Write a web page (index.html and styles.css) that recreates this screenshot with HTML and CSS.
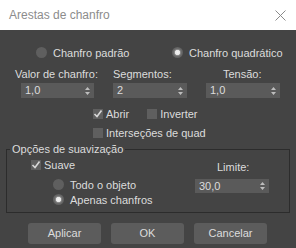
FILE: index.html
```html
<!DOCTYPE html>
<html>
<head>
<meta charset="utf-8">
<link rel="stylesheet" href="styles.css">
</head>
<body>
<div class="window">
  <div class="titlebar">
    <span class="title">Arestas de chanfro</span>
    <svg class="close" width="11" height="11" viewBox="0 0 11 11"><path d="M0.5 0.5 L10.5 10.5 M10.5 0.5 L0.5 10.5" stroke="#8a8a8a" stroke-width="1" fill="none"/></svg>
  </div>
  <div class="content">
    <div class="radio-row">
      <div class="radio"><span class="rb"></span><span>Chanfro padrão</span></div>
      <div class="radio"><span class="rb on"></span><span>Chanfro quadrático</span></div>
    </div>
    <div class="params">
      <div class="col c1">
        <div class="lbl">Valor de chanfro:</div>
        <div class="spin"><span>1,0</span><svg class="arr" width="5" height="8" viewBox="0 0 5 8"><path d="M0 3 L2.5 0 L5 3 Z M0 5 L2.5 8 L5 5 Z" fill="#bdbdbd"/></svg></div>
      </div>
      <div class="col c2">
        <div class="lbl">Segmentos:</div>
        <div class="spin"><span>2</span><svg class="arr" width="5" height="8" viewBox="0 0 5 8"><path d="M0 3 L2.5 0 L5 3 Z M0 5 L2.5 8 L5 5 Z" fill="#bdbdbd"/></svg></div>
      </div>
      <div class="col c3">
        <div class="lbl">Tensão:</div>
        <div class="spin"><span>1,0</span><svg class="arr" width="5" height="8" viewBox="0 0 5 8"><path d="M0 3 L2.5 0 L5 3 Z M0 5 L2.5 8 L5 5 Z" fill="#bdbdbd"/></svg></div>
      </div>
    </div>
    <div class="chk-row row-a">
      <div class="chk"><span class="cb"><svg width="10" height="10" viewBox="0 0 10 10"><path d="M1.5 5 L4 7.5 L8.5 1.5" stroke="#d8d8d8" stroke-width="1.6" fill="none"/></svg></span><span>Abrir</span></div>
      <div class="chk inv"><span class="cb"></span><span>Inverter</span></div>
    </div>
    <div class="chk-row row-b">
      <div class="chk"><span class="cb"></span><span>Interseções de quad</span></div>
    </div>
    <fieldset class="group">
      <legend>Opções de suavização</legend>
      <div class="gbody">
        <div class="gleft">
          <div class="chk suave"><span class="cb"><svg width="10" height="10" viewBox="0 0 10 10"><path d="M1.5 5 L4 7.5 L8.5 1.5" stroke="#d8d8d8" stroke-width="1.6" fill="none"/></svg></span><span>Suave</span></div>
          <div class="radio sub first"><span class="rb"></span><span>Todo o objeto</span></div>
          <div class="radio sub"><span class="rb on"></span><span>Apenas chanfros</span></div>
        </div>
        <div class="gright">
          <div class="lbl limite">Limite:</div>
          <div class="spin lspin"><span>30,0</span><svg class="arr" width="5" height="8" viewBox="0 0 5 8"><path d="M0 3 L2.5 0 L5 3 Z M0 5 L2.5 8 L5 5 Z" fill="#bdbdbd"/></svg></div>
        </div>
      </div>
    </fieldset>
    <div class="buttons">
      <div class="btn">Aplicar</div>
      <div class="btn">OK</div>
      <div class="btn">Cancelar</div>
    </div>
  </div>
</div>
</body>
</html>
```

FILE: styles.css
```css
* { box-sizing: border-box; }
html, body { margin: 0; padding: 0; }
body {
  width: 296px;
  height: 248px;
  overflow: hidden;
  background: #444444;
  font-family: "Liberation Sans", Arial, sans-serif;
  font-size: 11px;
  color: #dcdcdc;
}
.window { width: 296px; height: 248px; }
.titlebar {
  height: 30px;
  background: #ffffff;
  display: flex;
  align-items: center;
  justify-content: space-between;
  padding: 0 10px 0 9px;
}
.title { color: #8c8c8c; font-size: 12px; }
.close { display: block; }
.content { display: flex; flex-direction: column; }
.radio-row {
  margin-top: 14px;
  height: 17px;
  display: grid;
  grid-template-columns: 136px auto;
  padding-left: 36px;
  align-items: center;
}
.radio { display: flex; align-items: center; gap: 6px; line-height: 14px; }
.rb {
  width: 11px; height: 11px; border-radius: 50%;
  background: #5f5f5f;
  flex: none;
}
.rb.on {
  background: radial-gradient(circle, #f4f4f4 0, #e6e6e6 2.3px, #8a8a8a 3px, #6a6a6a 4px, #5f5f5f 5.5px);
}
.params {
  margin-top: 6px;
  display: grid;
  grid-template-columns: 98px 93px 74px;
  padding-left: 15px;
}
.col { display: flex; flex-direction: column; }
.lbl { line-height: 14px; height: 14px; white-space: nowrap; }
.c3 .lbl { margin-left: 17px; }
.spin {
  margin-top: 2px;
  width: 74px; height: 15px;
  background: #5a5a5a;
  display: flex; align-items: center; justify-content: space-between;
  padding: 0 4px 0 4px;
  line-height: 15px;
}
.c1 .spin { margin-left: 6px; width: 73px; }
.arr { display: block; }
.chk-row { display: flex; align-items: center; height: 14px; padding-left: 93px; }
.row-a { margin-top: 9px; }
.row-b { margin-top: 5px; }
.chk { display: flex; align-items: center; gap: 3px; line-height: 14px; }
.chk.inv { margin-left: 18px; }
.cb { width: 10px; height: 10px; background: #5f5f5f; flex: none; display: block; }
.cb svg { display: block; }
.group {
  margin: 2px 0 0 6px;
  width: 284px;
  padding: 0 0 5px 3px;
  border: 1px solid #2c2c2c;
  min-width: 0;
}
.group legend {
  padding: 0 2px;
  line-height: 14px;
  height: 14px;
}
.gbody { display: flex; }
.gleft { width: 185px; padding-left: 21px; display: flex; flex-direction: column; }
.suave { margin-top: 2px; height: 14px; }
.sub { height: 15px; margin-left: 22px; }
.sub.first { margin-top: 5px; }
.gright { display: flex; flex-direction: column; }
.limite { margin-top: 4px; margin-left: 22px; }
.lspin { margin-top: 5px; height: 14px; }
.buttons {
  margin-top: 10px;
  display: flex;
  gap: 10px;
  padding-left: 28px;
}
.btn {
  width: 73px; height: 21px;
  background: #5c5c5c;
  border-radius: 3px;
  display: flex; align-items: center; justify-content: center;
  line-height: 21px;
}
```
